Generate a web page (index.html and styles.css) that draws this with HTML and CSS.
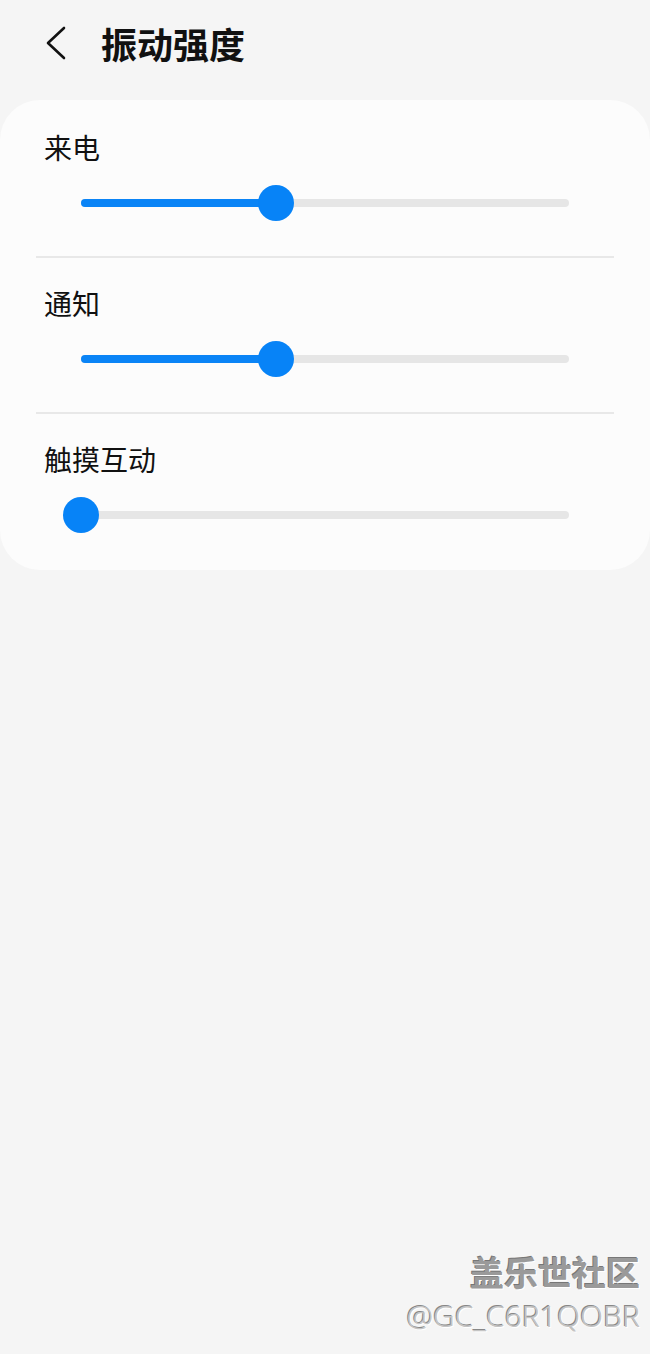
FILE: index.html
```html
<!DOCTYPE html>
<html lang="zh-CN">
<head>
  <meta charset="UTF-8">
  <meta name="viewport" content="width=device-width, initial-scale=1.0">
  <title>振动强度</title>
  <link rel="stylesheet" href="styles.css">
</head>
<body>
  <div class="header">
    <svg class="back" width="24" height="36" viewBox="0 0 24 36">
      <path d="M20 3 L4 18 L20 33" fill="none" stroke="#111" stroke-width="2.6" stroke-linecap="round" stroke-linejoin="round"/>
    </svg>
    <h1>振动强度</h1>
  </div>

  <div class="card">
    <div class="row">
      <div class="label">来电</div>
      <div class="slider">
        <div class="fill" style="width: 40%"></div>
        <div class="thumb" style="left: 40%"></div>
      </div>
    </div>
    <div class="divider"></div>
    <div class="row">
      <div class="label">通知</div>
      <div class="slider">
        <div class="fill" style="width: 40%"></div>
        <div class="thumb" style="left: 40%"></div>
      </div>
    </div>
    <div class="divider"></div>
    <div class="row">
      <div class="label">触摸互动</div>
      <div class="slider">
        <div class="fill" style="width: 0%"></div>
        <div class="thumb" style="left: 0%"></div>
      </div>
    </div>
  </div>

  <div class="watermark">
    <div class="wm-title">盖乐世社区</div>
    <div class="wm-user">@GC_C6R1QOBR</div>
  </div>
</body>
</html>
```

FILE: styles.css
```css
html, body {
  margin: 0;
  height: 100%;
}
body {
  font-family: "Noto Sans CJK SC", "Noto Sans", sans-serif;
  background: #f5f5f5;
  color: #111;
  position: relative;
  overflow: hidden;
}
.header {
  display: flex;
  align-items: center;
  height: 86px;
  padding-left: 44px;
  margin-bottom: 14px;
}
.back {
  display: block;
  margin-right: 33px;
}
h1 {
  margin: 0;
  font-size: 36px;
  font-weight: bold;
  line-height: 40px;
}
.card {
  background: #fcfcfc;
  border-radius: 40px;
  padding: 2px 0;
}
.row {
  padding: 27px 0 35px;
}
.label {
  padding-left: 44px;
  font-size: 28px;
  line-height: 36px;
  height: 36px;
}
.slider {
  position: relative;
  margin: 20px 81px 0;
  height: 36px;
}
.slider::before {
  content: "";
  position: absolute;
  left: 0;
  right: 0;
  top: 14px;
  height: 8px;
  border-radius: 4px;
  background: #e6e6e6;
}
.fill {
  position: absolute;
  left: 0;
  top: 14px;
  height: 8px;
  border-radius: 4px;
  background: #0a84f6;
}
.thumb {
  position: absolute;
  top: 0;
  width: 36px;
  height: 36px;
  margin-left: -18px;
  border-radius: 50%;
  background: #0783f7;
}
.divider {
  height: 2px;
  margin: 0 36px;
  background: #e8e8e8;
}
.watermark {
  position: absolute;
  right: 10px;
  bottom: 18px;
  text-align: right;
}
.wm-title {
  font-size: 34px;
  font-weight: bold;
  line-height: 40px;
  color: #9a9a9a;
  text-shadow: 1px 1px 0 #fff, -1px -1px 0 #777;
}
.wm-user {
  font-family: "Noto Sans", sans-serif;
  font-weight: 300;
  font-size: 30px;
  line-height: 40px;
  color: #c4c4c4;
  text-shadow: -1px -1px 0 #888, 1px 1px 0 #fff;
  margin-top: 4px;
}
```
